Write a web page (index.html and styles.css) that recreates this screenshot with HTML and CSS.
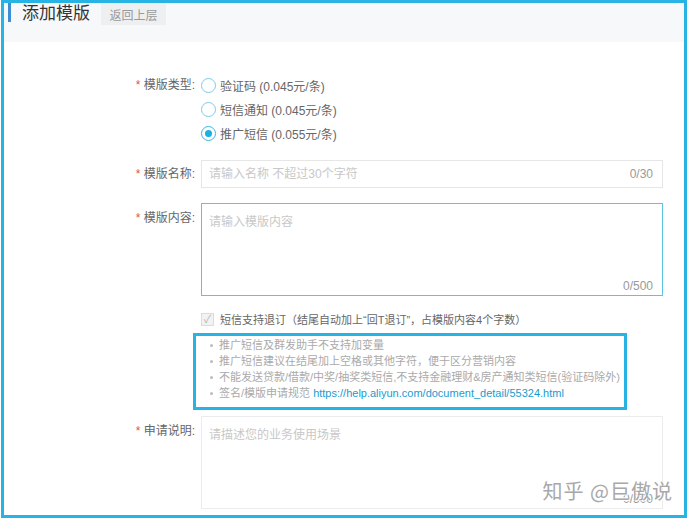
FILE: index.html
```html
<!DOCTYPE html>
<html lang="zh-CN">
<head>
    <meta charset="UTF-8">
    <title>添加模版</title>
    <link rel="stylesheet" href="styles.css">
</head>
<body>
    <div class="frame">
        <div class="page-header">
            <span class="header-bar"></span>
            <h2 class="page-title">添加模版</h2>
            <button class="back-button">返回上层</button>
        </div>

        <div class="form">
            <!-- 模版类型 -->
            <div class="form-row">
                <label class="form-label"><span class="required">*</span> 模版类型:</label>
                <div class="form-control">
                    <div class="radio-item"><span class="radio"></span>验证码 (0.045元/条)</div>
                    <div class="radio-item"><span class="radio"></span>短信通知 (0.045元/条)</div>
                    <div class="radio-item"><span class="radio checked"></span>推广短信 (0.055元/条)</div>
                </div>
            </div>

            <!-- 模版名称 -->
            <div class="form-row row-name">
                <label class="form-label label-input"><span class="required">*</span> 模版名称:</label>
                <div class="form-control field">
                    <input class="text-input" type="text" placeholder="请输入名称 不超过30个字符">
                    <span class="counter">0/30</span>
                </div>
            </div>

            <!-- 模版内容 -->
            <div class="form-row row-content">
                <label class="form-label label-area"><span class="required">*</span> 模版内容:</label>
                <div class="form-control field">
                    <textarea class="text-area focused" placeholder="请输入模版内容"></textarea>
                    <span class="counter counter-area">0/500</span>
                </div>
            </div>

            <div class="form-row row-check">
                <div></div>
                <div class="form-control">
                    <div class="check-item"><span class="checkbox">✓</span>短信支持退订（结尾自动加上“回T退订”，占模版内容4个字数）</div>
                    <ul class="notice">
                        <li>推广短信及群发助手不支持加变量</li>
                        <li>推广短信建议在结尾加上空格或其他字符，便于区分营销内容</li>
                        <li>不能发送贷款/借款/中奖/抽奖类短信,不支持金融理财&amp;房产通知类短信(验证码除外)</li>
                        <li>签名/模版申请规范 <a href="#">https://help.aliyun.com/document_detail/55324.html</a></li>
                    </ul>
                </div>
            </div>

            <!-- 申请说明 -->
            <div class="form-row row-desc">
                <label class="form-label label-area"><span class="required">*</span> 申请说明:</label>
                <div class="form-control field">
                    <textarea class="text-area" placeholder="请描述您的业务使用场景"></textarea>
                    <span class="counter counter-area">0/500</span>
                </div>
            </div>
        </div>

        <div class="watermark">知乎 @巨傲说</div>
    </div>
</body>
</html>
```

FILE: styles.css
```css
body {
    margin: 0;
    background: #fff;
    font-family: "Liberation Sans", "Noto Sans CJK SC", sans-serif;
    font-size: 12px;
    color: #666;
}

.frame {
    position: relative;
    margin-left: 1px;
    width: 680px;
    height: 512px;
    border: 3px solid #27b3e3;
    overflow: hidden;
}

.page-header {
    display: flex;
    align-items: flex-start;
    height: 39px;
    background: #f7f8fa;
}

.header-bar {
    width: 3px;
    height: 19px;
    margin-left: 4px;
    background: #3d8fd5;
}

.page-title {
    margin: 0 0 0 11px;
    font-size: 17px;
    font-weight: normal;
    line-height: 22px;
    color: #333;
}

.back-button {
    margin-left: 11px;
    width: 65px;
    height: 22px;
    border: none;
    background: #eeeff1;
    color: #999;
    font-family: inherit;
    font-size: 12px;
    padding: 0;
}

.form {
    padding-top: 31px;
}

.form-row {
    display: grid;
    grid-template-columns: 191px 462px;
    column-gap: 6px;
}

.form-label {
    text-align: right;
    line-height: 24px;
    color: #666;
}

.required {
    color: #e4572e;
}

.radio-item {
    display: flex;
    align-items: center;
    height: 24px;
    color: #666;
}

.radio {
    box-sizing: border-box;
    width: 15px;
    height: 15px;
    margin-right: 4px;
    border: 1px solid #7fcbe8;
    border-radius: 50%;
    background: #fff;
    position: relative;
}

.radio.checked {
    border-color: #3bb6e2;
}

.radio.checked::after {
    content: "";
    position: absolute;
    left: 3px;
    top: 3px;
    width: 7px;
    height: 7px;
    border-radius: 50%;
    background: #1ab0e2;
}

.row-name {
    margin-top: 15px;
}

.row-content {
    margin-top: 15px;
}

.label-input {
    line-height: 28px;
}

.label-area {
    line-height: 30px;
}

.field {
    position: relative;
}

.text-input,
.text-area {
    display: block;
    box-sizing: border-box;
    width: 462px;
    margin: 0;
    border: 1px solid #e6e6e6;
    background: #fff;
    font-family: inherit;
    font-size: 12px;
    color: #666;
    outline: none;
}

.text-input {
    height: 28px;
    padding: 0 7px;
}

.text-area {
    height: 93px;
    padding: 8px 7px;
    resize: none;
}

.text-area.focused {
    border-color: #5cc3e0;
}

.text-input::placeholder,
.text-area::placeholder {
    color: #c8c8c8;
}

.counter {
    position: absolute;
    right: 10px;
    top: 7px;
    color: #999;
}

.counter-area {
    top: auto;
    bottom: 3px;
}

.row-check {
    margin-top: 11px;
}

.check-item {
    display: flex;
    align-items: center;
    height: 24px;
    font-size: 11px;
    color: #666;
}

.checkbox {
    box-sizing: border-box;
    width: 13px;
    height: 13px;
    margin-right: 6px;
    border: 1px solid #dcdcdc;
    background: #f2f2f2;
    color: #b8b8b8;
    font-size: 11px;
    line-height: 11px;
    text-align: center;
}

.notice {
    box-sizing: border-box;
    width: 434px;
    margin: 2px 0 0 -8px;
    padding: 1px 0 6px 14px;
    border: 3px solid #27b3e3;
    list-style: none;
    font-size: 11px;
    color: #aaa;
    line-height: 16px;
}

.notice li {
    position: relative;
    padding-left: 9px;
    white-space: nowrap;
}

.notice li::before {
    content: "";
    position: absolute;
    left: 0;
    top: 7px;
    width: 3px;
    height: 3px;
    border-radius: 50%;
    background: #bbb;
}

.notice a {
    color: #1a9bcf;
    text-decoration: none;
}

.row-desc {
    margin-top: 6px;
}

.row-desc .text-area {
    border-color: #ececec;
}

.watermark {
    position: absolute;
    right: 11px;
    bottom: 10px;
    font-family: "Noto Sans CJK SC", sans-serif;
    font-size: 20px;
    color: #a8a8a8;
    text-shadow: 1px 1px 0 #fff, -1px -1px 0 #fff;
    letter-spacing: 1px;
}
```
